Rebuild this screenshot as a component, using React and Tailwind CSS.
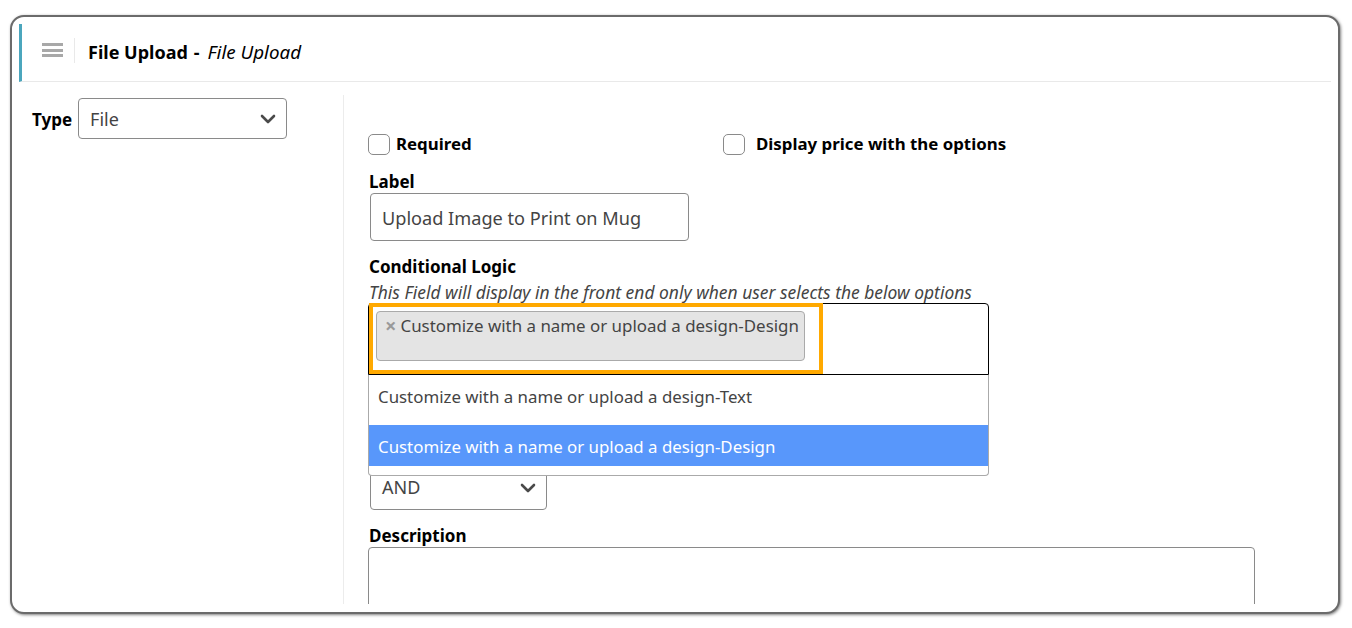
import React from "react";

function Chevron({ className }) {
  return (
    <svg viewBox="0 0 16 16" className={className} fill="none" stroke="#4a4a4a" strokeWidth="2.6" strokeLinecap="round" strokeLinejoin="round">
      <path d="M2 5l6 6 6-6" />
    </svg>
  );
}

function Select({ value, className, textClass }) {
  return (
    <div className={`flex items-center justify-between rounded-[4px] border border-[#8a8a8a] bg-white pl-[11px] pr-[10px] text-[18px] text-[#444] ${className}`}>
      <span className={textClass}>{value}</span>
      <Chevron className="h-4 w-4" />
    </div>
  );
}

function Check({ label, className }) {
  return (
    <label className={`flex items-center ${className}`}>
      <span className="h-[21px] w-[22px] shrink-0 rounded-[5px] border border-[#8a8a8a] bg-white" />
      <span className="-mt-[2px] text-[16.85px] font-bold text-black">{label}</span>
    </label>
  );
}

export default function App() {
  return (
    <div className="h-[628px] w-[1352px] overflow-hidden bg-white pl-[10px] pt-[15px] font-['Noto_Sans','Open_Sans',sans-serif] text-[17px] leading-[22px]">
      <div className="h-[599px] w-[1330px] rounded-[14px] border-2 border-[#6b6b6b] bg-white pb-[8px] pl-[7px] pr-[7px] pt-[7px] shadow-[1px_1px_3px_rgba(0,0,0,0.5)]">
        <div className="h-full overflow-hidden">
          <header className="flex h-[58px] items-center border-b border-[#e9e9e9] border-l-[3px] border-l-[#4ba6bd] pl-[20px]">
            <div className="mb-[4px] flex h-[25px] w-[32px] items-start pt-[5px]">
              <div className="flex w-[21px] flex-col gap-[2.5px]">
                <span className="h-[3px] bg-[#a8a8a8]" />
                <span className="h-[3px] bg-[#a8a8a8]" />
                <span className="h-[3px] bg-[#a8a8a8]" />
              </div>
            </div>
            <div className="mb-[4px] h-[25px] w-px bg-[#e9e9e9]" />
            <div className="mb-[2px] ml-[13px] flex text-[18px] text-black">
              <span className="font-bold">File Upload</span>
              <span className="ml-[6px] font-bold">-</span>
              <span className="ml-[8px] text-[18.8px] italic">File Upload</span>
            </div>
          </header>

          <div className="flex">
            <div className="w-[324px] shrink-0 pl-[13px] pt-[16px]">
              <div className="flex items-center gap-[6px]">
                <span className="mt-[2px] font-bold text-black">Type</span>
                <Select value="File" className="h-[41px] w-[209px]" />
              </div>
            </div>

            <div className="mt-[13px] h-[510px] flex-1 border-l border-[#ececec] pl-[24px] pt-[39px]">
              <div className="flex h-[21px]">
                <Check label="Required" className="w-[355px] gap-[6px]" />
                <Check label="Display price with the options" className="gap-[11px]" />
              </div>

              <div className="ml-px mt-[16px] font-bold text-black">Label</div>
              <div className="ml-[2px] flex h-[48px] w-[319px] items-center rounded-[4px] border border-[#8a8a8a] pl-[11px] pt-[2px] text-[18.15px] text-[#444]">
                Upload Image to Print on Mug
              </div>

              <div className="ml-px mt-[15px] font-bold text-black">Conditional Logic</div>
              <div className="ml-px mt-[3px] text-[17.45px] italic text-[#444]">This Field will display in the front end only when user selects the below options</div>

              <div className="relative z-10 w-[621px]">
                <div className="h-[72px] rounded-t-[4px] border border-black bg-white pl-[7px] pt-[7px]">
                  <div className="flex h-[50px] w-[429px] items-start rounded-[4px] border border-[#aaa] bg-[#e4e4e4] pl-[8px] pt-[3px] text-[16.9px] text-[#444]">
                    <span className="mr-[4px] text-[20px] font-bold leading-[22px] text-[#999]">×</span>
                    <span>Customize with a name or upload a design-Design</span>
                  </div>
                </div>
                <div className="absolute left-px top-0 h-[71px] w-[454px] border-[4px] border-[#ffa900]" />
                <div className="h-[101px] rounded-b-[4px] border border-t-0 border-[#aaa] bg-white text-[16.85px]">
                  <div className="flex h-[50px] items-center pb-[6px] pl-[9px] text-[#444]">Customize with a name or upload a design-Text</div>
                  <div className="flex h-[41px] items-center bg-[#5897fb] pl-[9px] pt-[3px] text-white">Customize with a name or upload a design-Design</div>
                </div>
              </div>

              <Select value="AND" textClass="-mt-[2px]" className="-mt-[11px] ml-[2px] h-[45px] w-[177px]" />

              <div className="ml-px mt-[15px] font-bold text-black">Description</div>
              <div className="h-[80px] w-[887px] rounded-[4px] border border-[#8a8a8a]" />
            </div>
          </div>
        </div>
      </div>
    </div>
  );
}
